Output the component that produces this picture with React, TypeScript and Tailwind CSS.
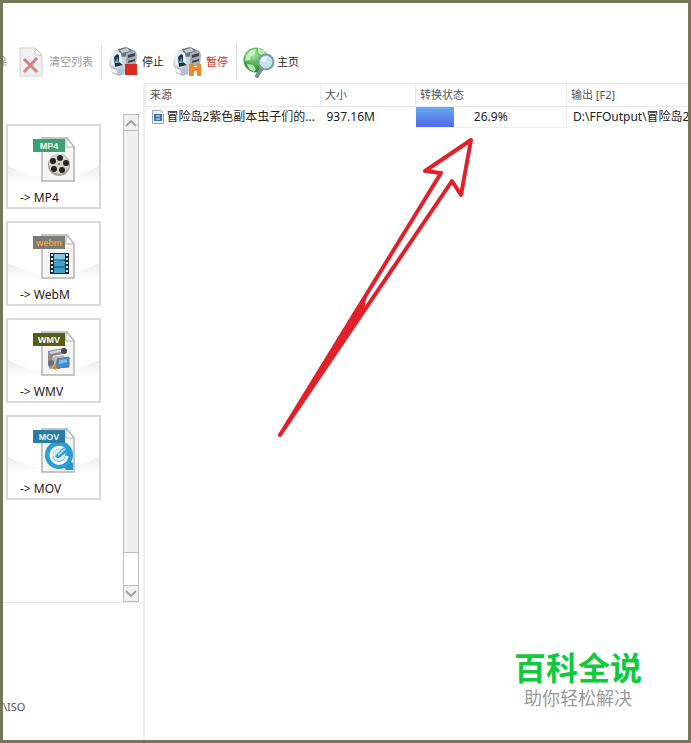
import type { ReactNode } from "react";

const formats = [
    { name: "MP4", label: "MP4", fill: "#3f9f74", color: "#e9fff4", art: <ReelArt /> },
    { name: "WebM", label: "webm", fill: "#7b7c78", color: "#f0a02c", art: <FilmArt /> },
    { name: "WMV", label: "WMV", fill: "#555d16", color: "#ffffff", art: <CameraArt /> },
    { name: "MOV", label: "MOV", fill: "#2a7ba6", color: "#e6f6ff", art: <QuickArt /> },
];

const tasks = [
    {
        source: "冒险岛2紫色副本虫子们的...",
        size: "937.16M",
        progress: 26.9,
        output: "D:\\FFOutput\\冒险岛2紫",
    },
];

function ReelArt() {
    const holes = [
        [28, 22],
        [34, 27],
        [30, 34],
        [22, 33],
        [21, 25],
    ];
    return (
        <g>
            <circle cx="27" cy="29" r="11" fill="#a19f9a" />
            <circle cx="27" cy="28" r="10" fill="#d3d1cc" />
            {holes.map(([x, y]) => (
                <circle key={`${x}-${y}`} cx={x} cy={y} r="3" fill="#29211e" />
            ))}
            <circle cx="27" cy="28" r="1" fill="#6a6561" />
        </g>
    );
}

function FilmArt() {
    return (
        <g>
            <rect x="18" y="20" width="19" height="21" fill="#20282c" />
            <rect x="22" y="21" width="11" height="19" fill="#3d9fca" />
            <path d="M22 21h11v5l-11 3z" fill="#83c9e4" />
            <path d="M22 27h11M22 34h11" stroke="#1d4c66" />
            <path d="M20 21v20M35 21v20" stroke="#e8edef" strokeWidth="2" strokeDasharray="2 2" />
        </g>
    );
}

function CameraArt() {
    return (
        <g>
            <path d="M16 21l16-3 3 2v3l-14 3v12l-3 1-2-4z" fill="#8b8d90" />
            <path d="M17 22l14-3 2 2-14 3z" fill="#cfd1d3" />
            <path d="M20 27l12-2 2 10-11 5-3-2z" fill="#b5b7ba" />
            <circle cx="19" cy="33" r="3" fill="#6b6d71" />
            <circle cx="32" cy="21" r="3" fill="#46494f" />
            <path d="M20 39l5-8 3 8z" fill="#d08a3e" />
            <path d="M25 29l12-2v10l-12 1z" fill="#3b8fd4" stroke="#68727c" />
            <path d="M27 30l8-1v3l-8 2z" fill="#7dbdf0" />
        </g>
    );
}

function QuickArt() {
    return (
        <g>
            <path d="M29 36l7-3 5 3v7h-7z" fill="#2496cc" />
            <circle cx="27" cy="28" r="14" fill="#2a9dd2" />
            <path d="M33 23a8 8 0 1 0 2 6" fill="#5cb6dd" stroke="#f5fafd" strokeWidth="3" />
            <circle cx="27" cy="28" r="6" fill="#d9eef7" />
            <path d="M25 31l-2-2 9-9 4 4-9 7z" fill="#2a9dd2" />
            <path d="M26 28l7-6" stroke="#a9dcf0" strokeWidth="2" />
        </g>
    );
}

type FormatProps = {
    name: string;
    label: string;
    fill: string;
    color: string;
    art: ReactNode;
};

function FormatCard({ name, label, fill, color, art }: FormatProps) {
    return (
        <button
            type="button"
            className="relative flex h-[85px] w-[95px] flex-col items-start border-2 border-[#d9d9d9] bg-white pt-2.5"
        >
            <svg className="absolute inset-0 size-full" viewBox="0 0 91 81" preserveAspectRatio="none" aria-hidden="true">
                <defs>
                    <linearGradient id={`swoosh-${name}`} x1="0" y1="0" x2="0" y2="1">
                        <stop offset="0" stopColor="#ebebeb" />
                        <stop offset="1" stopColor="#ffffff" />
                    </linearGradient>
                </defs>
                <path d="M0 40Q45 64 91 40V56H0z" fill={`url(#swoosh-${name})`} />
            </svg>
            <svg className="relative ml-6 h-[46px] w-[46px]" viewBox="0 0 46 46" aria-hidden="true">
                <path d="M10 2h25l7 9v34H10z" fill="#f5f5f5" stroke="#c4c4c4" strokeWidth="2" />
                <path d="M34 2v9h8z" fill="#ffffff" stroke="#b0b0b0" />
                {art}
                <rect x="1" y="3" width="32" height="13" fill={fill} />
                <text
                    x="17"
                    y="13"
                    fill={color}
                    textAnchor="middle"
                    className="font-['Liberation_Sans',sans-serif] text-[9px] font-bold"
                >
                    {label}
                </text>
            </svg>
            <span className="relative mt-2 ml-3 text-xs/4">-&gt; {name}</span>
        </button>
    );
}

function ClearIcon() {
    return (
        <svg className="h-[30px] w-6" viewBox="0 0 24 30" aria-hidden="true">
            <path d="M1 1h15l7 7v21H1z" fill="#f1f1f1" stroke="#cfcfcf" />
            <path d="M16 1v7h7z" fill="#fff" stroke="#c4c4c4" />
            <path d="M5 12l13 13M18 11L5 25" stroke="#d98080" strokeWidth="3" />
        </svg>
    );
}

function MachineIcon({ children }: { children: ReactNode }) {
    return (
        <svg className="h-[30px] w-[30px]" viewBox="0 0 30 30" aria-hidden="true">
            <path d="M3 9l5-6 6-1 4 3v22l-7 2-7-3-3-8z" fill="#c9d1d9" />
            <path d="M10 2l8-2 7 3-1 6-11 1z" fill="#6e7680" />
            <path d="M12 3l7-2 3 3-8 2z" fill="#c4cbd1" />
            <path d="M18 6l9-3 2 5-1 10-10 2z" fill="#a2abb4" />
            <path d="M20 8l7-2v3l-7 2zM20 14l7-2v2l-7 2z" fill="#3d454e" />
            <path d="M3 9l5-5 5 2 2 12-6 3-6-3z" fill="#e8eef3" />
            <path d="M6 10l3-3 2 1v7l4 3-8 2z" fill="#1f3443" />
            <path d="M9 10l2 6H7z" fill="#6da0bf" />
            <path d="M3 19l6 3 7-2v7l-6 2-6-3z" fill="#b4c3cf" />
            <path d="M2 20l7 4v3l-5-2z" fill="#eef2f5" />
            {children}
        </svg>
    );
}

function GlobeIcon() {
    return (
        <svg className="h-8 w-8" viewBox="0 0 32 32" aria-hidden="true">
            <defs>
                <radialGradient id="globe" cx="0.4" cy="0.3" r="0.75">
                    <stop offset="0" stopColor="#a9e9a0" />
                    <stop offset="0.55" stopColor="#45ac48" />
                    <stop offset="1" stopColor="#22733a" />
                </radialGradient>
            </defs>
            <circle cx="13" cy="14" r="12.5" fill="url(#globe)" />
            <path d="M3 9l5-5 5-1-1 5-4 2-1 4-5 1zM15 2l6 2 2 4-5 1-3-3zM4 18l6 1 3 4-2 3-5-3z" fill="#d6f6cd" opacity="0.8" />
            <path d="M19 22l-5 8" stroke="#7f8a90" strokeWidth="4" strokeLinecap="round" />
            <circle cx="23" cy="16" r="7.5" fill="#c7e2ec" stroke="#7c9ba4" strokeWidth="2" />
            <path d="M18 15a5 5 0 0 1 7-4l-3 5z" fill="#effaff" />
        </svg>
    );
}

function Toolbar() {
    return (
        <header className="flex h-[42px] shrink-0 items-center overflow-hidden text-[11px]/4 whitespace-nowrap">
            <button type="button" className="flex w-1 justify-end text-[#999]">
                除
            </button>
            <button type="button" className="ml-3 flex items-center gap-1.5 text-[#999]">
                <ClearIcon />
                清空列表
            </button>
            <span className="mr-1.5 ml-2 h-9 w-px bg-[#ddd]" />
            <button type="button" className="flex items-center gap-1">
                <MachineIcon>
                    <rect x="17" y="17" width="12" height="11" fill="#d92a20" />
                </MachineIcon>
                停止
            </button>
            <button type="button" className="ml-2 flex items-center gap-1 text-[#c23a1c]">
                <MachineIcon>
                    <path d="M17 17h5v3h3v-3h4v12h-4v-5h-3v5h-5z" fill="#f08a28" />
                </MachineIcon>
                暂停
            </button>
            <span className="ml-2 h-9 w-px bg-[#ddd]" />
            <button type="button" className="ml-1.5 flex items-center gap-0.5">
                <GlobeIcon />
                主页
            </button>
        </header>
    );
}

function ScrollBar() {
    return (
        <div className="flex w-4 shrink-0 flex-col border border-[#bdbdbd] bg-white">
            <button type="button" aria-label="Scroll up" className="flex h-4 items-center justify-center border-b border-[#bdbdbd] bg-[#f0f0f0]">
                <svg className="h-2 w-3" viewBox="0 0 12 8" aria-hidden="true">
                    <path d="M1 7l5-5 5 5" fill="none" stroke="#a3a3a3" strokeWidth="2" />
                </svg>
            </button>
            <div className="grow border-b border-[#bdbdbd] bg-[#f0f0f0]" />
            <div className="h-8" />
            <button type="button" aria-label="Scroll down" className="flex h-4 items-center justify-center border-t border-[#bdbdbd] bg-[#f0f0f0]">
                <svg className="h-2 w-3" viewBox="0 0 12 8" aria-hidden="true">
                    <path d="M1 1l5 5 5-5" fill="none" stroke="#a3a3a3" strokeWidth="2" />
                </svg>
            </button>
        </div>
    );
}

function Sidebar() {
    return (
        <aside className="flex w-[142px] shrink-0 flex-col border-r-2 border-[#f0f0f0]">
            <div className="mt-[31px] flex h-[489px] justify-between border-b border-[#e8e8e8] pr-1 pl-[3px]">
                <div className="flex flex-col gap-3 pt-2.5">
                    {formats.map((f) => (
                        <FormatCard key={f.name} {...f} />
                    ))}
                </div>
                <ScrollBar />
            </div>
            <p className="mt-24 text-[11px]/4 text-[#555]">\ISO</p>
        </aside>
    );
}

function TaskTable() {
    return (
        <table className="w-full table-fixed border-collapse text-left whitespace-nowrap">
            <colgroup>
                <col className="w-[175px]" />
                <col className="w-[95px]" />
                <col className="w-[151px]" />
                <col />
            </colgroup>
            <thead className="text-[11px] text-[#555]">
                <tr className="h-[23px] border-y border-[#e9e9e9]">
                    <th className="border-x border-[#e9e9e9] px-1 font-normal">来源</th>
                    <th className="border-r border-[#e9e9e9] px-1 font-normal">大小</th>
                    <th className="border-r border-[#e9e9e9] px-1 font-normal">转换状态</th>
                    <th className="px-1 font-normal">输出 [F2]</th>
                </tr>
            </thead>
            <tbody className="text-xs/5">
                {tasks.map((t) => (
                    <tr key={t.output}>
                        <td className="overflow-hidden pl-1.5">
                            <div className="flex items-center gap-[3px]">
                                <svg className="h-[14px] w-3 shrink-0" viewBox="0 0 12 14" aria-hidden="true">
                                    <path d="M.5.5h8l3 3v10H.5z" fill="#eef3f8" stroke="#9aa3ad" />
                                    <rect x="2" y="4" width="8" height="7" fill="#3e74ad" />
                                    <path d="M4 5h4v2H4zM4 8h4v2H4z" fill="#8db6de" />
                                </svg>
                                {t.source}
                            </div>
                        </td>
                        <td className="pl-1.5">{t.size}</td>
                        <td className="border-r border-b border-[#eee]">
                            <div className="relative text-center">
                                <div className="absolute inset-y-0 right-2 left-0">
                                    <div
                                        className="h-full bg-linear-to-b from-[#6aaaf0] to-[#5068e8]"
                                        style={{ width: `${t.progress}%` }}
                                    />
                                </div>
                                <span className="relative">{t.progress}%</span>
                            </div>
                        </td>
                        <td className="overflow-hidden pl-1.5">{t.output}</td>
                    </tr>
                ))}
            </tbody>
        </table>
    );
}

export default function App() {
    return (
        <div
            lang="zh-CN"
            className="relative flex min-h-screen flex-col overflow-hidden border-3 border-[#74775a] bg-white pt-[38px] font-['Noto_Sans','Noto_Sans_CJK_SC',sans-serif] text-[#222]"
        >
            <Toolbar />
            <div className="flex grow">
                <Sidebar />
                <main className="relative min-w-0 grow">
                    <TaskTable />
                    <svg className="absolute top-[50px] left-[130px] h-[310px] w-[205px]" viewBox="0 0 205 310" aria-hidden="true">
                        <path d="M5 302L92 161L89 178z" fill="#e2202a" />
                        <path
                            d="M5 302L166 40l-16-2L196 7l-10 55-9-14z"
                            fill="none"
                            stroke="#e2202a"
                            strokeWidth="4"
                            strokeLinejoin="round"
                        />
                    </svg>
                </main>
            </div>
            <div className="absolute right-[46px] bottom-[30px] text-center">
                <p className="text-[32px]/9 font-bold text-[#0fca3c]">百科全说</p>
                <p className="text-lg/6 text-[#999]">助你轻松解决</p>
            </div>
        </div>
    );
}
